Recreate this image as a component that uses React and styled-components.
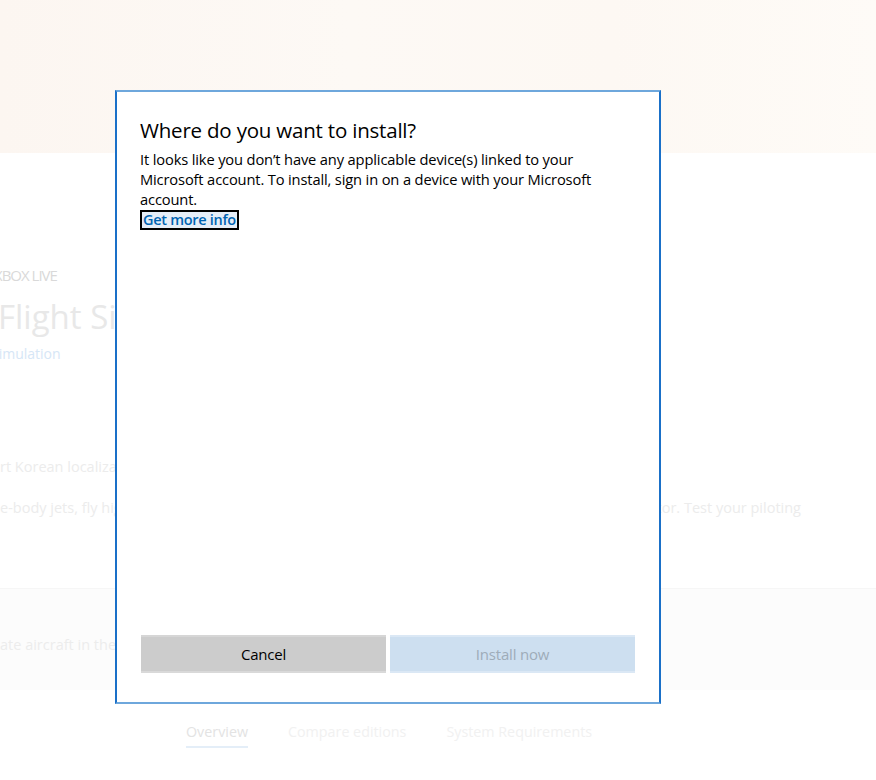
import React from "react";
import styled, { createGlobalStyle } from "styled-components";

const Global = createGlobalStyle`
  html, body { margin: 0; padding: 0; background: #ffffff; }
  body { font-family: "Open Sans", "Noto Sans", sans-serif; }
  * { box-sizing: border-box; }
`;

const Page = styled.div`
  position: relative;
  width: 876px;
  height: 780px;
  overflow: hidden;
  background: #ffffff;
`;

const Hero = styled.div`
  height: 153px;
  background: linear-gradient(90deg, #fcf6f1 0%, #fdf9f5 40%, #fdf8f3 70%, #fefbf7 100%);
`;

const Info = styled.div`
  display: flex;
  flex-direction: column;
  padding-top: 112px;
  margin-left: -6px;
`;

const Brand = styled.div`
  font-family: "Open Sans", sans-serif;
  font-size: 15px;
  letter-spacing: -1px;
  color: #d9d9d9;
  line-height: 20px;
`;

const Title = styled.div`
  font-size: 33px;
  color: #e8e8e8;
  line-height: 44px;
  margin-top: 10px;
  margin-left: 4px;
`;

const Category = styled.div`
  font-size: 14px;
  color: #d6e6f6;
  line-height: 20px;
  margin-top: 5px;
  margin-left: -3px;
`;

const Para = styled.div`
  display: flex;
  justify-content: space-between;
  font-size: 14.5px;
  color: #ececec;
  line-height: 20px;
  margin-top: ${(p) => p.$mt}px;
  margin-left: 6px;
  padding-right: 75px;
`;

const Band = styled.div`
  margin-top: 70px;
  height: 102px;
  background: #fcfcfc;
  border-top: 1px solid #f6f6f6;
  display: flex;
  align-items: flex-start;
  padding-top: 46px;
`;

const BandText = styled.div`
  font-size: 14.5px;
  line-height: 20px;
  color: #ececec;
`;

const Tabs = styled.div`
  display: flex;
  gap: 40px;
  padding-left: 186px;
  margin-top: 32px;
`;

const Tab = styled.div`
  font-size: 14.3px;
  line-height: 20px;
  padding-bottom: 4px;
  color: ${(p) => (p.$active ? "#e3e3e3" : "#f1f1f1")};
  border-bottom: 2px solid ${(p) => (p.$active ? "#e4eef8" : "transparent")};
`;

const Dialog = styled.div`
  position: absolute;
  left: 115px;
  top: 90px;
  width: 546px;
  height: 614px;
  background: #ffffff;
  border-left: 2px solid #1a70c8;
  border-right: 2px solid #1a70c8;
  border-top: 2px solid #6ea7dc;
  border-bottom: 2px solid #6ea7dc;
  display: flex;
  flex-direction: column;
  padding: 23px 24px 29px 23px;
  font-family: "Open Sans", "Noto Sans", sans-serif;
`;

const DTitle = styled.h1`
  margin: 0;
  font-weight: 400;
  font-size: 20.5px;
  line-height: 30px;
  color: #000;
  letter-spacing: -0.2px;
`;

const DBody = styled.p`
  margin: 4px 0 0 0;
  max-width: 470px;
  font-size: 14.7px;
  line-height: 20px;
  color: #000;
  letter-spacing: -0.15px;
`;

const LinkBox = styled.a`
  align-self: flex-start;
  display: inline-block;
  margin-top: 1px;
  font-size: 14.5px;
  font-weight: 600;
  line-height: 16px;
  color: #0063b1;
  background: #e6eef8;
  border: 2px solid #000;
  padding: 0 1px;
  text-decoration: none;
  letter-spacing: -0.3px;
`;

const Spacer = styled.div`
  flex: 1;
`;

const Buttons = styled.div`
  display: grid;
  grid-template-columns: 1fr 1fr;
  gap: 4px;
  padding-left: 1px;
`;

const Button = styled.button`
  height: 38px;
  border: 0;
  border-top: 2px solid ${(p) => (p.$primary ? "#dbe8f5" : "#d6d6d6")};
  border-bottom: 2px solid ${(p) => (p.$primary ? "#dbe8f5" : "#d9d9d9")};
  background: ${(p) => (p.$primary ? "#cddff0" : "#cccccc")};
  color: ${(p) => (p.$primary ? "#9eacb9" : "#000")};
  font-family: "Open Sans", "Noto Sans", sans-serif;
  font-size: 15px;
  letter-spacing: -0.2px;
  padding: 0;
`;

export default function App() {
  return (
    <Page>
      <Global />
      <Hero />
      <Info>
        <Brand>XBOX LIVE</Brand>
        <Title>Flight Simulator</Title>
        <Category>Simulation</Category>
        <Para $mt={93}>
          <span>rt Korean localization</span>
        </Para>
        <Para $mt={21}>
          <span>e-body jets, fly high</span>
          <span>tor. Test your piloting</span>
        </Para>
      </Info>
      <Band>
        <BandText>ate aircraft in the</BandText>
      </Band>
      <Tabs>
        <Tab $active>Overview</Tab>
        <Tab>Compare editions</Tab>
        <Tab>System Requirements</Tab>
      </Tabs>

      <Dialog role="dialog">
        <DTitle>Where do you want to install?</DTitle>
        <DBody>
          It looks like you don’t have any applicable device(s) linked to your
          Microsoft account. To install, sign in on a device with your Microsoft
          account.
        </DBody>
        <LinkBox href="#">Get more info</LinkBox>
        <Spacer />
        <Buttons>
          <Button>Cancel</Button>
          <Button $primary>Install now</Button>
        </Buttons>
      </Dialog>
    </Page>
  );
}
